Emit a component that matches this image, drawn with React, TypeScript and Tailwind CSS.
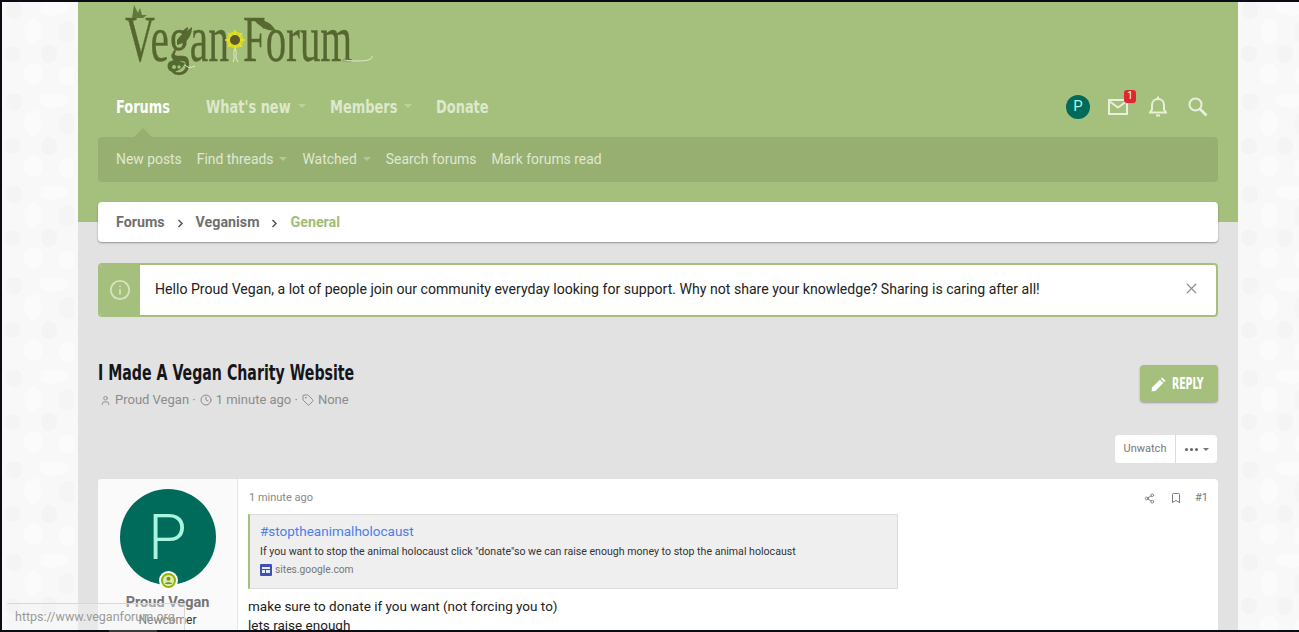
import { Bookmark, Clock, Info, Share2, Tag, User, X } from "lucide-react";

const body = "font-['Roboto','Open_Sans',sans-serif]";
const heavy = "font-['DejaVu_Sans_Condensed','Liberation_Sans',sans-serif] font-bold";

function Pattern({ id }: { id: string }) {
  return (
    <svg className="h-full w-full" aria-hidden="true">
      <defs>
        <pattern id={id} width="72" height="92" patternUnits="userSpaceOnUse">
          <rect width="72" height="92" fill="#f8f8f8" />
          <ellipse cx="12" cy="8" rx="8" ry="9" fill="#f4f4f4" />
          <ellipse cx="52" cy="6" rx="15" ry="8" fill="#fbfbfb" />
          <ellipse cx="31" cy="29" rx="9" ry="13" fill="#fbfbfb" />
          <ellipse cx="11" cy="52" rx="8" ry="8" fill="#f4f4f4" />
          <ellipse cx="47" cy="52" rx="8" ry="9" fill="#f4f4f4" />
          <ellipse cx="31" cy="72" rx="10" ry="11" fill="#fbfbfb" />
          <ellipse cx="65" cy="30" rx="9" ry="11" fill="#f5f5f5" />
          <ellipse cx="65" cy="74" rx="9" ry="10" fill="#fbfbfb" />
        </pattern>
      </defs>
      <rect width="100%" height="100%" fill={`url(#${id})`} />
    </svg>
  );
}

function Caret({ color = "border-t-[#bcd19c]" }: { color?: string }) {
  return <span className={`inline-block h-0 w-0 border-x-[4.5px] border-t-[4.5px] border-x-transparent ${color}`} />;
}

function Logo() {
  const word = "block w-[107px] origin-top-left whitespace-nowrap text-[65px] leading-[70px] [-webkit-text-stroke:0.5px_#56662f] [text-shadow:0_0_1px_#d9e6c4]";
  return (
    <div className="relative ml-[27px] h-[70px] w-[250px]">
      <div className="flex h-[70px] items-start font-['Liberation_Serif',serif] text-[#56662f]">
        <span className={`${word} scale-x-[0.64]`}>Vegan</span>
        <span className={`${word} ml-[11px] scale-x-[0.63]`}>Forum</span>
      </div>
      <svg className="absolute left-0 top-0" width="250" height="70" viewBox="0 0 250 70" aria-hidden="true">
        <path d="M9 1 L13 9 L15 4 L17 11 L22 11 L18 14 L7 14 Z" fill="#63773a" />
        <path d="M52 36 C56 30 62 27 67 23 C67 30 64 36 58 39 L52 41 Z" fill="#56692f" />
        <path d="M44 58 C50 54 55 58 60 59 C57 66 50 69 45 67 C42 65 42 60 44 58 Z" fill="#4f6d2c" />
        <circle cx="49" cy="63" r="2" fill="#a5c07d" />
        <circle cx="54" cy="63" r="1.7" fill="#a5c07d" />
        <path d="M60 61 C64 65 67 63 70 62" stroke="#e3eccf" strokeWidth="1" fill="none" />
        <path d="M247 52 C248 57 237 57 230 57 L218 56" stroke="#dfe8cc" strokeWidth="1" fill="none" />
        <circle cx="110" cy="36" r="8.5" fill="#d8d921" />
        <g stroke="#e6e32a" strokeWidth="1.6">
          <path d="M110 26 V46 M100 36 H120 M103 29 L117 43 M117 29 L103 43" />
        </g>
        <circle cx="110" cy="36" r="5" fill="#5f5a26" />
        <path d="M110 45 C107 50 111 52 108 58 M110 45 C113 50 109 53 113 58" stroke="#e3eccf" strokeWidth="1" fill="none" />
        <path d="M130 17 C140 14 147 20 151 27 C142 27 135 23 130 17 Z" fill="#56692f" />
      </svg>
    </div>
  );
}

function NavTab({ label, width, caret, active, className = "" }: { label: string; width: string; caret?: boolean; active?: boolean; className?: string }) {
  return (
    <div className={`flex items-center whitespace-nowrap text-[18px] ${heavy} ${active ? "text-white" : "text-[#dde8cd]"} ${className}`}>
      <span className={`block origin-left scale-x-[0.8] ${width}`}>{label}</span>
      {caret && <span className="ml-[6px] flex"><Caret /></span>}
    </div>
  );
}

function SubNavItem({ label, caret }: { label: string; caret?: boolean }) {
  return (
    <div className="flex items-center gap-[6px] whitespace-nowrap text-[13.9px] text-[#dfe8d0]">
      <span>{label}</span>
      {caret && <span className="inline-block h-0 w-0 border-x-4 border-t-4 border-x-transparent border-t-[#b6c89b]" />}
    </div>
  );
}

function Header() {
  return (
    <div className="h-[220px] shrink-0 bg-[#a5c07d] px-5">
      <div className="h-[83px] pt-[2px]">
        <Logo />
      </div>
      <div className="relative flex h-[52px] items-center pb-[10px] pl-[18px] pr-[10px]">
        <NavTab label="Forums" width="w-[54px]" active className="mr-[36px]" />
        <NavTab label="What's new" width="w-[86px]" caret className="mr-[24px]" />
        <NavTab label="Members" width="w-[68px]" caret className="mr-[24px]" />
        <NavTab label="Donate" width="w-[52px]" />
        <div className="ml-auto flex items-center pt-[1px]">
          <div className="flex h-6 w-6 items-center justify-center rounded-full bg-[#006a5b] text-[15px] text-[#a8f5e0]">P</div>
          <div className="relative ml-[18px]">
            <svg width="20" height="16" viewBox="0 0 20 16" fill="none" stroke="#e8efda" strokeWidth="2" aria-hidden="true" className="block">
              <rect x="1" y="1" width="18" height="14" />
              <path d="M1 2 L10 8.5 L19 2" />
            </svg>
            <span className="absolute -right-[8px] -top-[9px] flex h-[13px] w-[12px] items-center justify-center rounded-[3px] bg-[#e0262e] text-[10px] leading-none text-white">1</span>
          </div>
          <svg width="18" height="21" viewBox="0 0 18 21" fill="none" stroke="#e8efda" strokeWidth="2" aria-hidden="true" className="ml-[21px] block">
            <path d="M1 16.5 H17 L15 13.5 V9 C15 5.5 12.5 3 9 3 C5.5 3 3 5.5 3 9 V13.5 Z" />
            <path d="M9 0.5 V3 M7 19.5 H11" />
          </svg>
          <svg width="20" height="20" viewBox="0 0 20 20" fill="none" stroke="#e8efda" aria-hidden="true" className="ml-[21px] block">
            <circle cx="7.5" cy="7.5" r="6" strokeWidth="2" />
            <path d="M12 12 L18.5 18.5" strokeWidth="2.6" />
          </svg>
        </div>
        <span className="absolute bottom-0 left-[36px] h-0 w-0 border-x-[9px] border-b-[9px] border-x-transparent border-b-[#98af72]" />
      </div>
      <div className="flex h-[45px] items-center gap-[15px] rounded bg-[#98af72] pl-[18px]">
        <SubNavItem label="New posts" />
        <SubNavItem label="Find threads" caret />
        <SubNavItem label="Watched" caret />
        <SubNavItem label="Search forums" />
        <SubNavItem label="Mark forums read" />
      </div>
    </div>
  );
}

function Crumb() {
  return (
    <svg width="7" height="9" viewBox="0 0 7 9" fill="none" stroke="#555" strokeWidth="1.5" aria-hidden="true" className="mx-[12px] mt-[1px]">
      <path d="M1.5 1 L5 4.5 L1.5 8" />
    </svg>
  );
}

function Content() {
  return (
    <div className="flex min-h-0 flex-1 flex-col bg-[#e2e2e2] px-5">
      <div className="-mt-5 flex h-10 shrink-0 items-center rounded bg-white pl-[18px] pt-[1px] text-[14.25px] font-bold text-[#6f6f6f] shadow-[0_1px_2px_rgba(0,0,0,0.35)]">
        <span>Forums</span>
        <Crumb />
        <span>Veganism</span>
        <Crumb />
        <span className="text-[#a0bd78]">General</span>
      </div>

      <div className="mt-[21px] flex h-[54px] shrink-0 overflow-hidden rounded border-2 border-[#a5c07d] bg-white">
        <div className="flex w-10 shrink-0 items-center justify-center bg-[#a5c07d]">
          <Info size={22} strokeWidth={2} className="text-[#d5e2c0]" />
        </div>
        <div className="flex flex-1 items-center pl-[15px] text-[14.1px] text-[#222]">
          Hello Proud Vegan, a lot of people join our community everyday looking for support. Why not share your knowledge? Sharing is caring after all!
        </div>
        <div className="flex w-[50px] items-center justify-center pb-[4px]">
          <X size={17} strokeWidth={1.6} className="text-[#8a8a8a]" />
        </div>
      </div>

      <div className="mt-[48px] flex h-[37px] shrink-0 items-start justify-between">
        <div>
          <div className={`-mt-[6px] w-[257px] origin-left scale-x-[0.75] whitespace-nowrap text-[21px] leading-[28px] text-[#15151a] ${heavy}`}>I Made A Vegan Charity Website</div>
          <div className="mt-[4px] flex items-center text-[13px] leading-[18px] text-[#8c8c8c]">
            <User size={11} className="mx-[2px]" />
            <span className="ml-[2px]">Proud Vegan ·</span>
            <Clock size={12} className="mx-[4px]" />
            <span>1 minute ago ·</span>
            <Tag size={12} className="mx-[4px]" />
            <span>None</span>
          </div>
        </div>
        <div className="flex h-[37px] w-[78px] items-center justify-center gap-[5px] rounded bg-[#a5c07d] text-white shadow-[0_1px_2px_rgba(0,0,0,0.3)]">
          <svg width="16" height="16" viewBox="0 0 16 16" aria-hidden="true" fill="#fff">
            <path d="M11.2 1.4 14.6 4.8 13.2 6.2 9.8 2.8Z M8.9 3.7 12.3 7.1 4.4 15 0.6 15.4 1 11.6Z" />
          </svg>
          <span className={`block w-[35px] origin-left scale-x-[0.65] text-[16px] ${heavy}`}>REPLY</span>
        </div>
      </div>

      <div className="mt-[33px] flex h-7 shrink-0 justify-end pr-[1px]">
        <div className="flex h-7 overflow-hidden rounded bg-white text-[11px] text-[#777]">
          <div className="flex w-[61px] items-center justify-center border-r border-[#dcdcdc]">Unwatch</div>
          <div className="flex w-[41px] items-center justify-center gap-[5px]">
            <span className="flex gap-[2px]">
              <span className="h-[3px] w-[3px] rounded-full bg-[#666]" />
              <span className="h-[3px] w-[3px] rounded-full bg-[#666]" />
              <span className="h-[3px] w-[3px] rounded-full bg-[#666]" />
            </span>
            <span className="inline-block h-0 w-0 border-x-[3.5px] border-t-[3.5px] border-x-transparent border-t-[#777]" />
          </div>
        </div>
      </div>

      <div className="mt-4 flex h-[200px] shrink-0 rounded-t bg-white">
        <div className="flex w-[140px] shrink-0 flex-col items-center rounded-tl border-r border-[#e6e6e6] bg-[#fafafa] pt-[10px]">
          <div className="relative flex h-24 w-24 items-center justify-center rounded-full bg-[#006a5b] text-[63px] font-light leading-none text-[#a8f5e0]">
            P
            <span className="absolute -bottom-[5px] left-[39px] flex h-[19px] w-[19px] items-center justify-center rounded-full bg-white">
              <svg width="15" height="15" viewBox="0 0 15 15" aria-hidden="true">
                <circle cx="7.5" cy="7.5" r="7.5" fill="#8db600" />
                <circle cx="7.5" cy="7.5" r="5.5" fill="#dfe8b8" />
                <circle cx="7.5" cy="5.8" r="2" fill="#6f9a10" />
                <path d="M3.8 11 C4.5 8.8 10.5 8.8 11.2 11 Z" fill="#6f9a10" />
              </svg>
            </span>
          </div>
          <div className="mt-[9px] text-[14.5px] font-bold leading-[18px] text-[#757575]">Proud Vegan</div>
          <div className="text-[12px] leading-[16px] text-[#333]">Newcomer</div>
        </div>
        <div className="min-w-0 flex-1 pl-[11px] pr-[10px] pt-[11px]">
          <div className="flex h-[16px] items-center justify-between text-[11px] text-[#888]">
            <span>1 minute ago</span>
            <div className="flex items-center text-[#7a7a7a]">
              <Share2 size={11} />
              <Bookmark size={12} className="ml-[15px]" />
              <span className="ml-[13px] text-[11px]">#1</span>
            </div>
          </div>
          <div className="-ml-px mt-[8px] flex h-[75px] w-[650px] flex-col border border-l-2 border-[#dcdcdc] border-l-[#a5c07d] bg-[#efefef] pl-[10px] pt-[6px]">
            <div className="text-[13.5px] leading-[20px] text-[#4a80e8]">#stoptheanimalholocaust</div>
            <div className="mt-[4px] whitespace-nowrap text-[10.6px] leading-[14px] text-[#333]">If you want to stop the animal holocaust click "donate"so we can raise enough money to stop the animal holocaust</div>
            <div className="mt-[4px] flex items-center gap-[3px] text-[10.25px] leading-[14px] text-[#777]">
              <svg width="12" height="12" viewBox="0 0 12 12" aria-hidden="true">
                <rect width="12" height="12" rx="1" fill="#3f51b5" />
                <path d="M2 3h8v2H2z M2 6h3v3H2z M6 6h4v3H6z" fill="#e8eaf6" />
              </svg>
              <span>sites.google.com</span>
            </div>
          </div>
          <div className="-ml-px mt-[8px] text-[13.5px] leading-[19px] text-[#222]">
            <div>make sure to donate if you want (not forcing you to)</div>
            <div>lets raise enough</div>
          </div>
        </div>
      </div>
    </div>
  );
}

export default function App() {
  return (
    <div className={`relative flex h-[632px] w-[1299px] flex-col overflow-hidden bg-[#0b0b14] ${body}`}>
      <div className="flex min-h-0 flex-1 py-[2px] pl-[2px]">
        <div className="w-[76px] shrink-0"><Pattern id="patternLeft" /></div>
        <div className="flex w-[1160px] shrink-0 flex-col overflow-hidden">
          <Header />
          <Content />
        </div>
        <div className="min-w-0 flex-1"><Pattern id="patternRight" /></div>
      </div>
      <div className="absolute bottom-[2px] left-[7px] flex h-[27px] w-[178px] items-center rounded-tr border-r border-t border-[#d8d8d8] bg-[#f3f3f3]/40 pl-[8px] text-[12.5px] text-[#9a9a9a]">
        https://www.veganforum.org
      </div>
      <div className="absolute bottom-0 left-[109px] h-[2px] w-[48px] bg-[#3a3a3a]" />
    </div>
  );
}
